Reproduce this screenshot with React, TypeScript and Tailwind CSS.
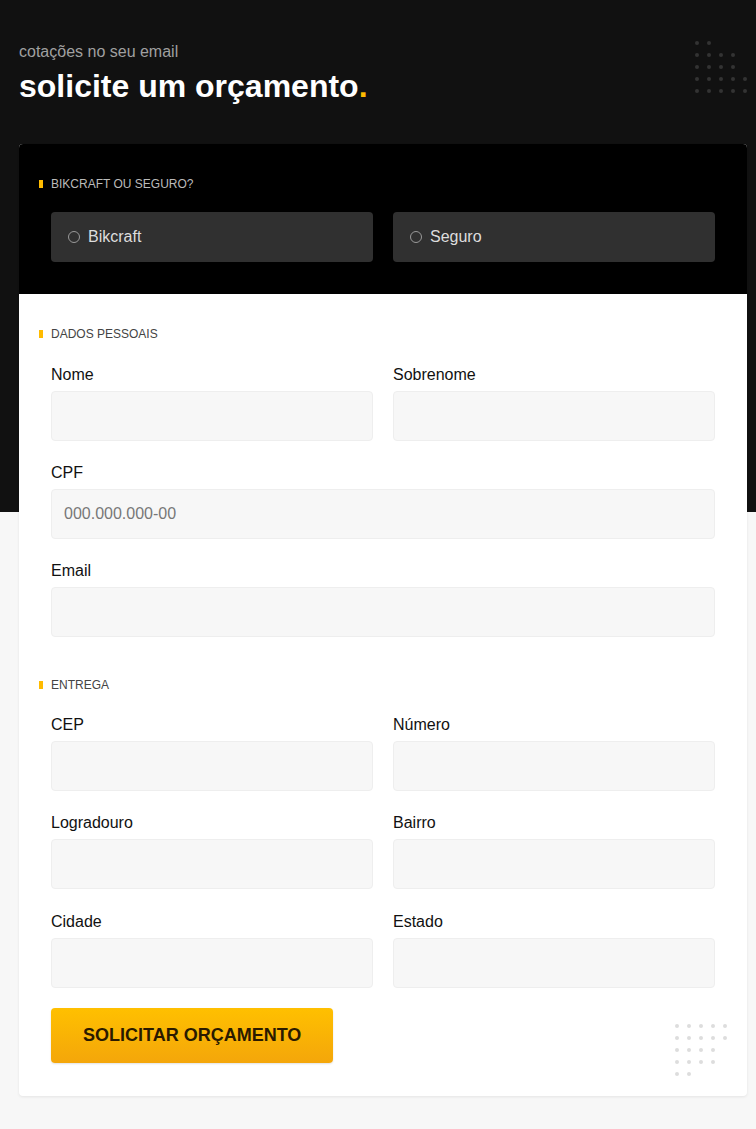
import React from "react";

const topDots = [
  [1, 1, 0, 0, 0],
  [1, 1, 1, 1, 0],
  [1, 1, 1, 1, 0],
  [1, 1, 1, 1, 1],
  [1, 1, 1, 1, 1],
];

const bottomDots = [
  [1, 1, 1, 1, 1],
  [1, 1, 1, 1, 1],
  [1, 1, 1, 1, 0],
  [1, 1, 1, 1, 0],
  [1, 1, 0, 0, 0],
];

const Dots = ({ rows, color }: { rows: number[][]; color: string }) => (
  <div className="grid grid-cols-5 gap-2">
    {rows.flat().map((on, i) => (
      <span key={i} className={`block w-1 h-1 rounded-full ${on ? color : "bg-transparent"}`} />
    ))}
  </div>
);

const SectionTitle = ({ children, dark }: { children: React.ReactNode; dark?: boolean }) => (
  <h2
    className={`relative h-4 text-[12px] leading-4 uppercase ${dark ? "text-[#bbbbbb]" : "text-[#444444]"}`}
  >
    <span className="absolute left-[-12px] top-1 w-1 h-2 bg-[#ffbb00]" />
    {children}
  </h2>
);

const Field = ({ label, placeholder, full }: { label: string; placeholder?: string; full?: boolean }) => (
  <label className={`flex flex-col ${full ? "col-span-2" : ""}`}>
    <span className="text-[16px] leading-6 mb-1 text-[#111111]">{label}</span>
    <input
      placeholder={placeholder}
      className="h-[50px] px-3 rounded bg-[#f7f7f7] border border-[#eeeeee] text-[16px] text-[#333333] placeholder:text-[#777777] outline-none"
    />
  </label>
);

const Radio = ({ label }: { label: string }) => (
  <label className="flex items-center h-[50px] px-[17px] gap-2 rounded bg-[#303030] text-[16px] text-[#dddddd]">
    <span className="w-3 h-3 rounded-full border border-[#999999]" />
    {label}
  </label>
);

const App = () => {
  return (
    <div
      className="min-h-screen pl-[19px] pr-[9px] pt-10 pb-[33px] bg-[linear-gradient(to_bottom,#111111_512px,#f7f7f7_512px)]"
      style={{ fontFamily: '"Liberation Sans", Arial, sans-serif' }}
    >
      <div className="flex justify-between">
        <div>
          <p className="text-[16px] leading-6 text-[#a0a0a0]">cotações no seu email</p>
          <h1 className="mt-[3px] text-[32px] leading-[38px] font-bold text-white">
            solicite um orçamento<span className="text-[#ffbb00]">.</span>
          </h1>
        </div>
        <div className="pt-[1px]">
          <Dots rows={topDots} color="bg-[#333333]" />
        </div>
      </div>

      <form className="relative mt-[39px] rounded bg-white shadow-[0_1px_3px_rgba(0,0,0,0.08)]">
        {/* tipo */}
        <div className="px-8 pt-8 pb-8 bg-black rounded-t">
          <SectionTitle dark>Bikcraft ou seguro?</SectionTitle>
          <div className="grid grid-cols-2 gap-5 mt-5">
            <Radio label="Bikcraft" />
            <Radio label="Seguro" />
          </div>
        </div>

        {/* dados pessoais */}
        <div className="px-8 pt-8 pb-[33px]">
          <SectionTitle>Dados pessoais</SectionTitle>
          <div className="grid grid-cols-2 gap-x-5 gap-y-5 mt-[21px]">
            <Field label="Nome" />
            <Field label="Sobrenome" />
            <Field label="CPF" placeholder="000.000.000-00" full />
            <Field label="Email" full />
          </div>

          {/* entrega */}
          <div className="mt-10">
            <SectionTitle>Entrega</SectionTitle>
          </div>
          <div className="grid grid-cols-2 gap-x-5 gap-y-5 mt-5">
            <Field label="CEP" />
            <Field label="Número" />
            <Field label="Logradouro" />
            <Field label="Bairro" />
            <div className="col-span-2 grid grid-cols-2 gap-x-5 mt-[1px]">
              <Field label="Cidade" />
              <Field label="Estado" />
            </div>
          </div>

          <button
            type="button"
            className="mt-5 h-[55px] px-8 rounded bg-[linear-gradient(to_bottom,#ffc000,#f4a60a)] text-[18px] font-bold uppercase text-[#2a1a00] shadow-[0_1px_2px_rgba(0,0,0,0.12)]"
          >
            Solicitar orçamento
          </button>
        </div>

        <div className="absolute right-5 bottom-5">
          <Dots rows={bottomDots} color="bg-[#dddddd]" />
        </div>
      </form>
    </div>
  );
};

export default App;
